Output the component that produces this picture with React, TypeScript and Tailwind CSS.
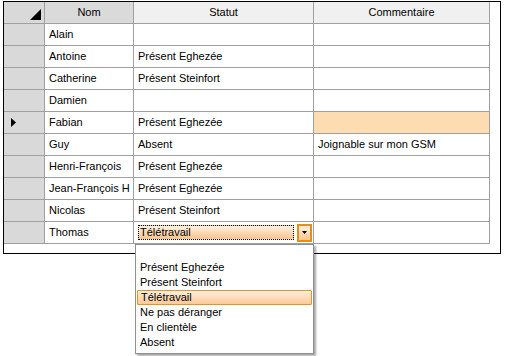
const rows: [string, string, string][] = [
  ["Alain", "", ""],
  ["Antoine", "Présent Eghezée", ""],
  ["Catherine", "Présent Steinfort", ""],
  ["Damien", "", ""],
  ["Fabian", "Présent Eghezée", ""],
  ["Guy", "Absent", "Joignable sur mon GSM"],
  ["Henri-François", "Présent Eghezée", ""],
  ["Jean-François H", "Présent Eghezée", ""],
  ["Nicolas", "Présent Steinfort", ""],
  ["Thomas", "", ""],
];

const options = ["", "Présent Eghezée", "Présent Steinfort", "Télétravail", "Ne pas déranger", "En clientèle", "Absent"];

const cell = "h-[22px] border-b border-r border-[#a0a0a0] flex items-center";

function StatusEditor() {
  return (
    <div className="flex h-full items-center gap-[3px] pl-[4px]">
      <div className="flex h-[15px] w-[156px] items-center border border-dotted border-black bg-gradient-to-b from-[#fff1e2] to-[#fbc48c] pl-[1px]">
        Télétravail
      </div>
      <div className="flex h-[18px] w-[15px] items-center justify-center border-2 border-[#e38f1c] bg-gradient-to-b from-[#fff0e0] to-[#fcc792]">
        <svg width="5" height="3" viewBox="0 0 5 3">
          <path d="M0 0h5L2.5 3z" fill="#000" />
        </svg>
      </div>
    </div>
  );
}

export default function App() {
  return (
    <div className="relative h-[356px] w-[505px] bg-white text-[11px] leading-none text-black [font-family:'Liberation_Sans',Arial,sans-serif]">
      <div className="ml-[3px] mt-[1px] h-[253px] w-[498px] border border-black bg-white">
        <div className="grid grid-cols-[41px_89px_180px_176px]">
          <div className="flex h-[22px] items-end justify-end border-b border-r border-[#a0a0a0] bg-[#d9d9d9] pb-[3px] pr-[3px]">
            <svg width="11" height="11" viewBox="0 0 11 11">
              <path d="M11 0v11H0z" fill="#000" />
            </svg>
          </div>
          <div className="flex h-[22px] items-center justify-center border-b border-r border-[#a0a0a0] bg-[#dadada]">Nom</div>
          <div className="flex h-[22px] items-center justify-center border-b border-r border-[#a0a0a0] bg-[#f0f0f0]">Statut</div>
          <div className="flex h-[22px] items-center justify-center border-b border-r border-[#a0a0a0] bg-[#f0f0f0]">Commentaire</div>

          {rows.map(([nom, statut, comment]) => (
            <div key={nom} className="contents">
              <div className={`${cell} bg-[#d9d9d9] pl-[7px]`}>
                {nom === "Fabian" && (
                  <svg width="5" height="9" viewBox="0 0 5 9">
                    <path d="M0 0l5 4.5L0 9z" fill="#000" />
                  </svg>
                )}
              </div>
              <div className={`${cell} pl-[4px]`}>{nom}</div>
              <div className={`${cell} ${nom === "Thomas" ? "" : "pl-[4px]"}`}>
                {nom === "Thomas" ? <StatusEditor /> : statut}
              </div>
              <div className={`${cell} pl-[4px] ${nom === "Fabian" ? "bg-[#fddcb2]" : ""}`}>{comment}</div>
            </div>
          ))}
        </div>
      </div>

      <div className="absolute left-[135px] top-[243px] h-[110px] w-[179px] border border-[#8f8f8f] bg-white shadow-[2px_2px_2px_rgba(0,0,0,0.35)]">
        {options.map((o, i) => (
          <div
            key={i}
            className={`mx-[1px] flex h-[15px] items-center pl-[3px] ${
              o === "Télétravail"
                ? "rounded-[1px] border border-[#e4922a] bg-gradient-to-b from-[#ffeedd] to-[#fcc995] pl-[2px]"
                : ""
            }`}
          >
            {o}
          </div>
        ))}
      </div>
    </div>
  );
}
